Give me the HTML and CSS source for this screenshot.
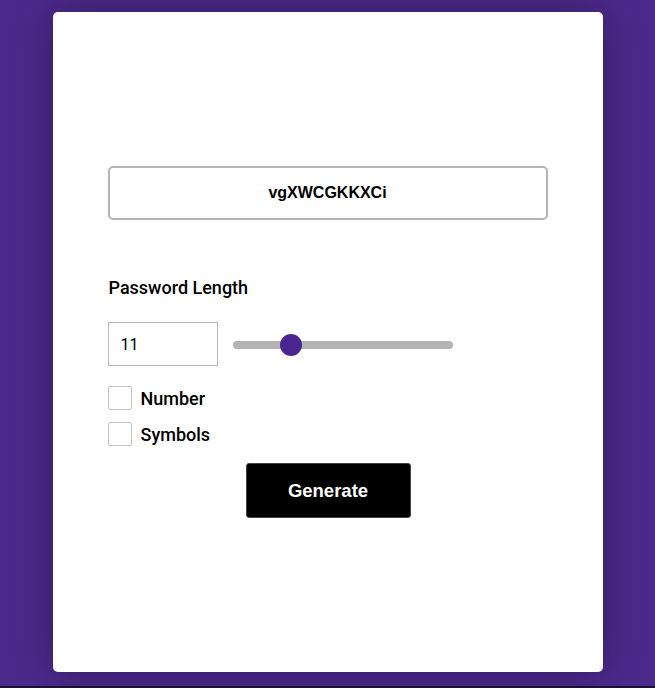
FILE: index.html
```html
<!DOCTYPE html>
<html lang="en">
<head>
<meta charset="utf-8">
<title>Password Generator</title>
<link rel="stylesheet" href="styles.css">
</head>
<body>
<main class="card">
  <div class="content">
    <div class="output">vgXWCGKKXCi</div>
    <label class="length-label">Password Length</label>
    <div class="length-row">
      <input class="length-input" type="number" value="11">
      <input class="slider" type="range" min="5" max="30" value="11">
    </div>
    <label class="option"><input type="checkbox" class="check"><span class="option-text">Number</span></label>
    <label class="option"><input type="checkbox" class="check"><span class="option-text">Symbols</span></label>
    <div class="actions"><button class="generate">Generate</button></div>
  </div>
</main>
</body>
</html>
```
FILE: styles.css
```css
html, body {
  margin: 0;
  padding: 0;
}
body {
  background: #4c2a8c;
  height: 684px;
  padding-bottom: 2px;
  border-bottom: 2px solid #1c1133;
  display: flex;
  align-items: center;
  justify-content: center;
  font-family: Roboto, "Liberation Sans", sans-serif;
  color: #000;
}
.card {
  width: 550px;
  height: 660px;
  background: #fff;
  border-radius: 5px;
  box-shadow: 0 0 40px rgba(20, 8, 40, 0.45);
  display: flex;
  align-items: center;
  justify-content: center;
}
.content {
  width: 440px;
  display: flex;
  flex-direction: column;
}
.output {
  box-sizing: border-box;
  height: 54px;
  border: 2px solid #b4b4b4;
  border-radius: 5px;
  display: flex;
  align-items: center;
  justify-content: center;
  font-family: "Liberation Sans", Arial, sans-serif;
  font-weight: bold;
  font-size: 16px;
  color: #000;
}
.length-label {
  margin-top: 58px;
  margin-left: 1px;
  font-size: 18px;
  line-height: 20px;
  font-weight: 500;
}
.length-row {
  margin-top: 24px;
  display: flex;
  align-items: center;
  gap: 15px;
}
.length-input {
  box-sizing: border-box;
  width: 110px;
  height: 44px;
  border: 1px solid #b8b8b8;
  border-radius: 0;
  padding: 0 12px;
  font-family: Roboto, sans-serif;
  font-size: 16px;
  color: #000;
  -moz-appearance: textfield;
  appearance: textfield;
}
.length-input::-webkit-inner-spin-button,
.length-input::-webkit-outer-spin-button {
  -webkit-appearance: none;
  margin: 0;
}
.slider {
  -webkit-appearance: none;
  appearance: none;
  width: 220px;
  height: 8px;
  margin: 1px 0 0 0;
  border-radius: 4px;
  background: #b3b3b3;
  outline: none;
}
.slider::-webkit-slider-thumb {
  -webkit-appearance: none;
  appearance: none;
  width: 22px;
  height: 22px;
  border-radius: 50%;
  background: #4b2693;
  border: none;
  cursor: pointer;
}
.option {
  display: flex;
  align-items: center;
  gap: 9px;
  font-size: 18px;
  font-weight: 500;
  line-height: 24px;
}
.option-text {
  margin-top: 1px;
  margin-bottom: -1px;
}
.length-row + .option {
  margin-top: 20px;
}
.option + .option {
  margin-top: 12px;
}
.check {
  -webkit-appearance: none;
  appearance: none;
  box-sizing: border-box;
  width: 24px;
  height: 24px;
  margin: 0;
  border: 1px solid #c4c4c4;
  border-radius: 2px;
  background: #fff;
}
.actions {
  margin-top: 17px;
  display: flex;
  justify-content: center;
}
.generate {
  box-sizing: border-box;
  width: 165px;
  height: 55px;
  margin-left: 1px;
  background: #000;
  color: #fff;
  border: 1px solid #444;
  border-radius: 3px;
  font-family: "Liberation Sans", Arial, sans-serif;
  font-weight: bold;
  font-size: 18.5px;
}
```
